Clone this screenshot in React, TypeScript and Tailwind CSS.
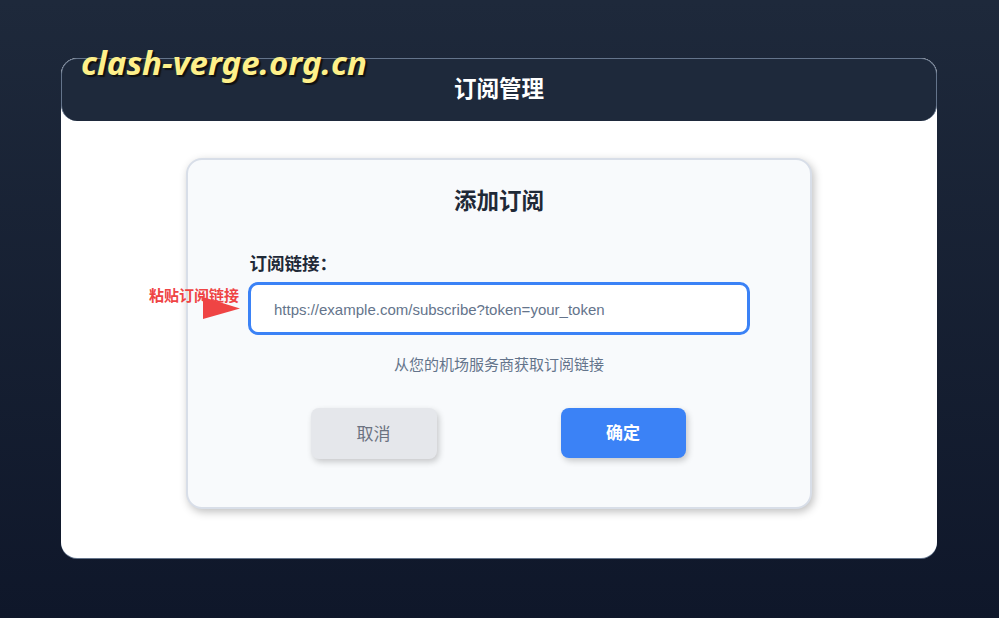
const CJK = "font-['Inter','Liberation_Sans','Noto_Sans_CJK_SC',sans-serif]";

export default function App() {
  return (
    <div className={`relative h-[618px] w-[999px] overflow-hidden bg-gradient-to-b from-[#1e293b] to-[#0f172a] pl-[61px] pt-[58px] ${CJK}`}>
      {/* Watermark */}
      <span className="absolute left-[81px] top-[43px] text-[33px] leading-10 font-bold italic text-[#fef08a] [font-family:'Noto_Sans',sans-serif] [text-shadow:2px_2px_1px_#111]">
        clash-verge.org.cn
      </span>

      <div className="h-[500px] w-[876px] overflow-hidden rounded-2xl bg-white shadow-[0_1px_0_#64748b]">
        <div className="flex h-[63px] items-center justify-center rounded-2xl border-x border-t border-[#64748b] bg-[#1e293b] pb-[3px] text-[22.5px] font-bold text-white">
          订阅管理
        </div>

        <div className="pt-[37px] pl-[125px]">
          <div className="relative flex h-[351px] w-[626px] flex-col items-center rounded-2xl border-2 border-[#d8dee8] bg-[#f8fafc] px-[60px] pt-[25px] shadow-[2px_3px_8px_rgba(0,0,0,0.25)]">
            <h2 className="text-[22.5px] leading-8 font-bold text-[#1f2937]">添加订阅</h2>

            <label className="mt-[35px] ml-[3px] w-full text-[17.5px] leading-6 font-bold text-[#1f2937]">订阅链接：</label>
            <input
              readOnly
              placeholder="https://example.com/subscribe?token=your_token"
              className="mt-[6px] h-[53px] w-[502px] rounded-[10px] border-[3px] border-[#3b82f6] bg-white px-[23px] pt-[2px] text-[15px] text-[#1f2937] outline-none placeholder:text-[#64748b] [font-family:'Liberation_Sans',sans-serif]"
            />
            <p className="mt-[20px] text-[15px] leading-5 text-[#64748b]">从您的机场服务商获取订阅链接</p>

            <div className="mt-[33px] mr-[2px] flex w-[375px] justify-between">
              <button className="h-[51px] w-[126px] rounded-lg bg-[#e5e7eb] pt-[2px] text-[17px] text-[#6b7280] shadow-[2px_3px_6px_rgba(0,0,0,0.2)]">
                取消
              </button>
              <button className="h-[50px] w-[125px] rounded-lg bg-[#3b82f6] pt-[2px] text-[17px] font-bold text-white shadow-[2px_3px_6px_rgba(0,0,0,0.2)]">
                确定
              </button>
            </div>
          </div>
        </div>
      </div>

      {/* Annotation */}
      <span className="absolute left-[149px] top-[286px] text-[15px] leading-5 font-bold whitespace-nowrap text-[#ef4444]">粘贴订阅链接</span>
      <svg className="absolute left-[200px] top-[294px]" width="44" height="28" viewBox="0 0 44 28">
        <polygon points="3,3 40,14.5 3,25" fill="#ef4444" />
      </svg>
    </div>
  );
}
